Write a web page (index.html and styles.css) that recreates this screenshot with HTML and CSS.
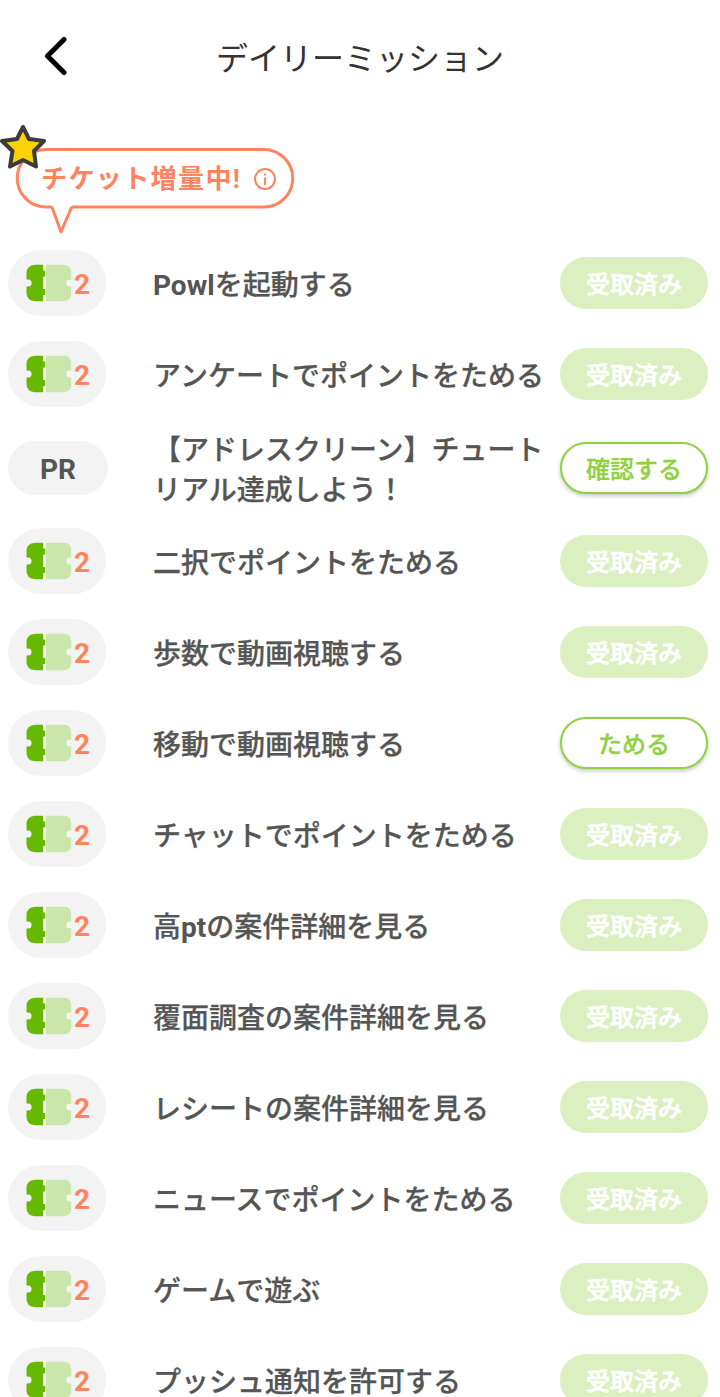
FILE: index.html
```html
<!DOCTYPE html>
<html lang="ja">
    <head>
        <meta charset="UTF-8">
        <title>デイリーミッション</title>
        <link rel="stylesheet" href="styles.css">
    </head>
    <body>
        <header class="header">
            <svg class="back" viewBox="0 0 24 40">
                <path d="M20 3.5 L3.500 20 L20 36.500"/>
            </svg>
            <h1>デイリーミッション</h1>
        </header>

        <!-- Speech bubble with the star over its corner -->
        <div class="campaign">
            <svg class="bubble" viewBox="0 0 300 112">
                <path class="outline" d="M46 27.500 H264 A28.750 28.750 0 0 1 264 85 H73 Q71.500 85 71 86.500 L61 110 L52.500 86.500 Q52 85 50.500 85 H46 A28.750 28.750 0 0 1 46 27.500 Z"/>
                <path class="star" d="M23 5 L29 17 L44 19 L34 29 L36 44.500 L23 38 L10 44.500 L12.500 29 L2 19 L17 17 Z"/>
            </svg>
            <p class="campaign-text">チケット増量中!</p>
            <svg class="info" viewBox="0 0 24 24">
                <circle cx="12" cy="12" r="10"/>
                <path d="M12 10.500 V18"/>
                <path d="M12 6.400 V8.600"/>
            </svg>
        </div>

        <ul class="missions" id="missions"></ul>

        <!-- Ticket icon shared by all the rows -->
        <svg class="defs">
            <symbol id="ticket" viewBox="0 0 46 38">
                <path fill="#fbfbf8" d="M17 1 H20.500 V37 H17 Z"/>
                <path fill="#66b900" d="M9 .8 H17.200 V6.500 H19.200 V12.500 H17.200 V25 H19.200 V31 H17.200 V37.200 H9 Q.5 36.500 .5 29 V22.600 H2 A3.600 3.600 0 0 0 2 15.400 H.5 V9 Q.5 1.500 9 .8 Z"/>
                <path fill="#cae6aa" d="M20 .8 H38 Q45 1.200 45.200 8 V15.400 H44 A3.600 3.600 0 0 0 44 22.600 H45.200 V30 Q45 36.800 38 37.200 H20 Z"/>
            </symbol>
        </svg>

        <script>
            var missions = [
                ["<b>Powl</b>を起動する", "受取済み"],
                ["アンケートでポイントをためる", "受取済み"],
                ["【アドレスクリーン】チュートリアル達成しよう！", "確認する"],
                ["二択でポイントをためる", "受取済み"],
                ["歩数で動画視聴する", "受取済み"],
                ["移動で動画視聴する", "ためる"],
                ["チャットでポイントをためる", "受取済み"],
                ["高<b>pt</b>の案件詳細を見る", "受取済み"],
                ["覆面調査の案件詳細を見る", "受取済み"],
                ["レシートの案件詳細を見る", "受取済み"],
                ["ニュースでポイントをためる", "受取済み"],
                ["ゲームで遊ぶ", "受取済み"],
                ["プッシュ通知を許可する", "受取済み"]
            ];
            var html = "";

            for (var [name, action] of missions) {
                var isPr = action == "確認する";
                var badge = isPr
                    ? '<div class="badge pr">PR</div>'
                    : '<div class="badge"><svg class="ticket"><use href="#ticket"/></svg><span class="count">2</span></div>';
                // Claimed missions can not be pressed again
                var disabled = action == "受取済み" ? " disabled" : "";

                html += `<li class="mission${isPr ? " ad" : ""}">
                    ${badge}
                    <p class="name">${name}</p>
                    <button class="button"${disabled}>${action}</button>
                </li>`;
            }
            document.getElementById("missions").innerHTML = html;
        </script>
    </body>
</html>
```

FILE: styles.css
```css
* {
    box-sizing: border-box;
}

html {
    height: 100%;
    overflow: hidden;
}

body {
    height: 100%;
    margin: 0;
    overflow: hidden;
    background-color: white;
    color: #555;
    font-family: Roboto, "Noto Sans CJK JP", sans-serif;
}

h1 {
    margin: 0;
    color: #333;
    font-size: 32px;
    font-weight: 400;
    line-height: 40px;
}

.header {
    display: grid;
    grid-template-columns: 80px 1fr 80px;
    align-items: center;
    height: 112px;
    text-align: center;
}

.header h1 {
    padding-top: 6px;
}

.back {
    width: 24px;
    height: 40px;
    margin-left: 43.5px;
    fill: none;
    stroke: black;
    stroke-width: 5;
    stroke-linecap: round;
    stroke-linejoin: round;
}

.campaign {
    position: relative;
    display: flex;
    align-items: center;
    width: 300px;
    height: 114px;
    margin-top: 10px;
    padding-left: 41px;
}

.bubble {
    position: absolute;
    top: 0;
    left: 0;
    width: 300px;
    height: 112px;
}

.outline {
    fill: white;
    stroke: #ff835f;
    stroke-width: 3;
    stroke-linejoin: round;
}

.star {
    fill: #fbd304;
    stroke: #3b3b3b;
    stroke-width: 4;
    stroke-linejoin: round;
}

.campaign-text {
    position: relative;
    margin: 0;
    color: #ff835f;
    font-size: 26px;
    font-weight: 700;
    letter-spacing: 1.4px;
    line-height: 38px;
}

.info {
    position: relative;
    width: 24px;
    height: 24px;
    margin-left: 11.5px;
    fill: none;
    stroke: #ff835f;
    stroke-width: 2;
}

.missions {
    display: flex;
    flex-direction: column;
    gap: 25px;
    margin: 0;
    padding: 14px 12px 0 8px;
    list-style: none;
}

.mission {
    display: grid;
    grid-template-columns: 145px 407px 148px;
    grid-template-rows: 100%;
    align-items: center;
    height: 66px;
    flex-shrink: 0;
}

.mission.ad {
    height: 71px;
    padding-top: 1px;
}

.badge {
    display: flex;
    align-items: center;
    justify-content: center;
    width: 98px;
    height: 66px;
    padding-left: 2px;
    border-radius: 33px;
    background-color: #f3f3f3;
    color: #ff835f;
    font-size: 28px;
    font-weight: 700;
    gap: 2px;
}

.badge.pr {
    width: 100px;
    height: 54px;
    padding: 2px 0 0;
    border-radius: 27px;
    color: #555;
}

.ticket {
    width: 46px;
    height: 38px;
}

.count {
    padding-top: 2px;
}

.name {
    margin: 0;
    padding: 5px 15px 0 0;
    font-size: 28px;
    font-weight: 500;
    line-height: 40px;
    -webkit-text-stroke: 0.25px #555;
}

.name b {
    -webkit-text-stroke: 0;
}

.button {
    width: 148px;
    height: 52px;
    padding: 0 0 2px;
    border: 2px solid #8fd13f;
    border-radius: 26px;
    background-color: white;
    box-shadow: 0 2px 4px rgba(0, 0, 0, 0.22);
    color: #8fd13f;
    font-family: inherit;
    font-size: 24px;
    font-weight: 500;
    -webkit-text-stroke: 0.3px;
}

.button:disabled {
    border: none;
    background-color: #dcefc1;
    box-shadow: none;
    color: white;
    -webkit-text-stroke: 0.6px;
}

.defs {
    display: none;
}
```
